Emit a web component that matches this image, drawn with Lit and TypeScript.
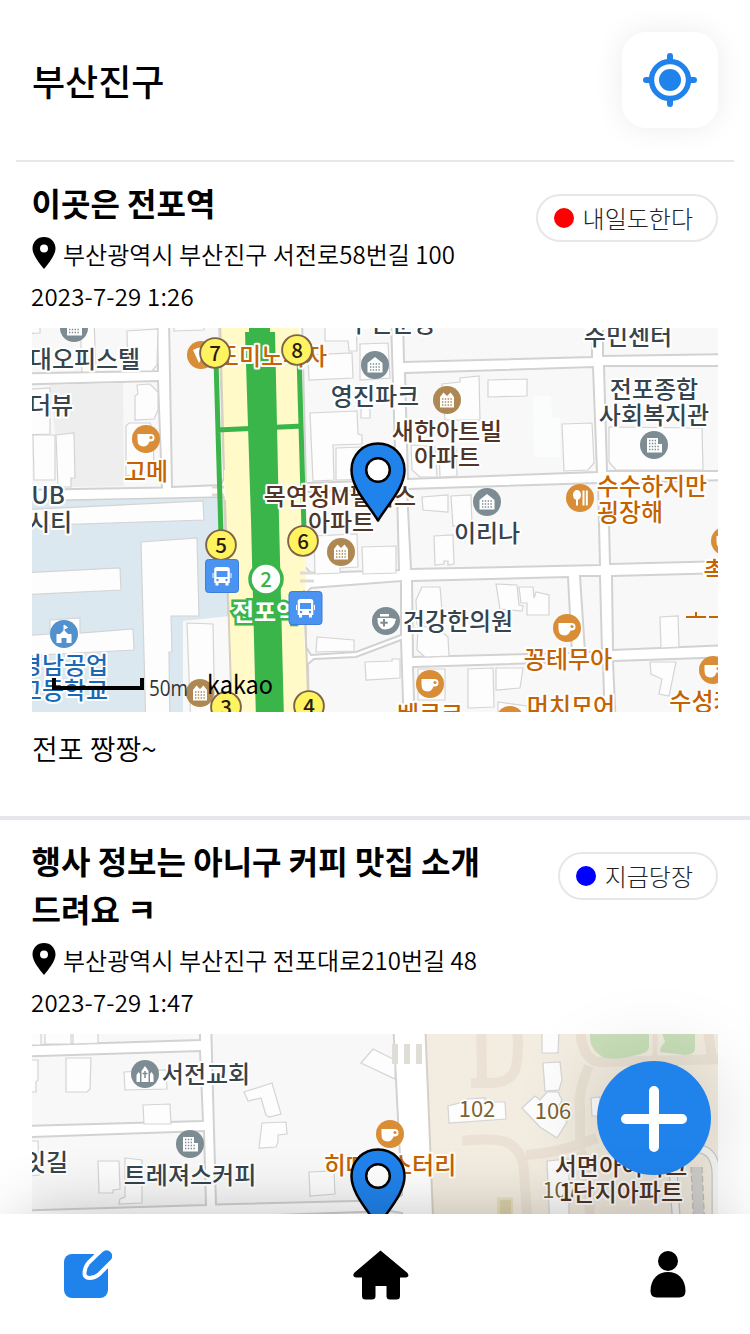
import { LitElement, html, svg, css } from "lit";
import { customElement, property } from "lit/decorators.js";

type Poi = [number, number, string, string];
type Label = [number, number, string, string];

const SLATE = "#7d8c93";
const ORANGE = "#d98d37";
const BROWN = "#ae8753";
const INK = "#36444d";
const RUST = "#c46300";
const COCOA = "#513526";

const glyphs: Record<string, unknown> = {
  cup: svg`<path d="M-8.500-5H4.500q4 0 4 4t-5 3.500q-1.800 5-6 5q-6 0-6-7z"/><circle cx="5" cy="-1.500" r="1.600" fill="#d98d37"/>`,
  home: svg`<path d="M-7.500-2 0-8 7.500-2V7.500H-7.500z"/><path d="M-5-1H5M-5 2H5M-5 5H5" stroke="#7d8c93" stroke-width="1.400" stroke-dasharray="1.400 1.400"/>`,
  office: svg`<path d="M-7-7H4V-1H8V7.500H-7z"/><path d="M-5-4.500H3M-5-1.500H3M-5 1.500H6M-5 4.500H6" stroke="#7d8c93" stroke-width="1.400" stroke-dasharray="1.400 1.400"/>`,
  apt: svg`<path d="M-7-3-3.500-7.500 0-4 3.500-7.500 7-3V7.500H-7z"/><path d="M-5-1H5M-5 2H5M-5 5H5" stroke="#ae8753" stroke-width="1.400" stroke-dasharray="1.400 1.400"/>`,
  fork: svg`<ellipse cx="-3" cy="-3" rx="4" ry="5"/><path d="M-3 0V7.500M3.500-7.500V7.500M6.800-7.500V7.500" stroke="#fff" stroke-width="2"/>`,
  pizza: svg`<path d="M-8-5Q-2-9 6-7L-2 8z"/>`,
  school: svg`<path d="M-7.500 0H-4L0-4 4 0H7.500V9H2.500V4H-2.500V9H-7.500z"/><path d="M0-3V-9L3.500-6.500 0-5" stroke="#fff" stroke-width="1"/>`,
  church: svg`<path d="M-3.500 8V-3L0-8 3.500-3V8zM-8.500 8V1l2-3 1.500 2V8zM8.500 8V1L6.500-2 5 0V8z"/><path d="M0-3V4M-2.500-.5H2.500" stroke="#7d8c93" stroke-width="1.500"/>`,
  clinic: svg`<path d="M-8.500-3H5L10-2Q8 8.500-1 8.500Q-9 8-8.500-3zM-6-7H3V-4.500H-6z"/><path d="M-2-2V5.500M-5.700 1.800H1.700" stroke="#7d8c93" stroke-width="2"/>`,
};

const poi = ([x, y, color, kind]: Poi) => svg`<g transform="translate(${x} ${y})" fill="#fff">
  <circle r="14" fill=${color}></circle>${glyphs[kind]}</g>`;

const label = ([x, y, color, text]: Label) =>
  svg`<text class="label" x=${x} y=${y + 0.6} fill=${color}>${text}</text>`;

const poly = (cls: string, list: string[]) =>
  list.map((p) => svg`<polygon class=${cls} points=${p}></polygon>`);

const pin = (x: number, y: number) => svg`<g transform="translate(${x} ${y})">
  <path d="M0-26.500C15-26.500 26.500-15 26.500 0C26.500 18 10 34 0 50.500C-10 34-26.500 18-26.500 0C-26.500-15-15-26.500 0-26.500z"
    fill="#2083ec" stroke="#000" stroke-width="2.500" stroke-linejoin="round"/>
  <circle cy="0" r="11.800" fill="#fff" stroke="#000" stroke-width="2.500"/></g>`;

const exit = (x: number, y: number, n: string) => svg`
  <circle cx=${x} cy=${y} r="14.900" fill="#fff460" stroke="#7c6446" stroke-width="1.900"></circle>
  <text class="exit" x=${x} y=${y + 7.5} fill="#2c1b12">${n}</text>`;

const bus = (x: number, y: number) => svg`<g transform="translate(${x} ${y})">
  <rect x="-16.500" y="-16.500" width="33" height="33" rx="3" fill="#4a93f0" stroke="#3c7fd6" stroke-width="1"/>
  <path fill="#fff" d="M-5-9H5q2.800 0 2.800 2.500V7H6.500v2.500H3.500V7h-7v2.500H-6.500V7H-7.800V-6.500Q-7.800-9-5-9z"/>
  <path d="M-5.500-5H5.500V1H-5.500z" fill="#4a93f0"/><circle cx="-4.500" cy="4" r="1.200" fill="#4a93f0"/><circle cx="4.500" cy="4" r="1.200" fill="#4a93f0"/>
  <path d="M-9-3V2M9-3V2" stroke="#fff" stroke-width="1"/></g>`;

const stationMap = () => svg`
  ${poly("block", [
    "20,320 157,320 158,371 20,373.500",
    "20,384.500 158,381 162,487.500 20,490",
    "169,320 219,320 224,478 221,485 172,487",
    "302,320 391,320 396,480 306,483",
    "403,320 404,362 592,357 592,320",
    "603,320 603,356 730,354 730,320",
    "405,373 593,367 597,472 408,479",
    "604,366 730,366 730,471 607,471",
    "305,492 397,489 399,570 311,573 304,566",
    "407,489 598,483 600,565 411,569",
    "608,483 730,480 730,561 610,564",
    "305,594 311,588 401,581 401,635 356,652 311,655 306,647",
    "308,664 314,659 356,657 401,640 404,730 309,730",
    "412,581 568,577 572,653 413,657",
    "580,576 600,576 602,652 585,652",
    "612,576 730,573 730,645 613,650",
    "413,667 603,661 605,730 415,730",
    "613,661 730,657 730,730 616,730",
  ])}
  <path d="M50 385 123 383 124 486 71 487 71 435 55 434z" fill="#eee"/>
  <path d="M20 501 224 497 232 730 20 730z" fill="#dce8ef" stroke="#d0d0cf" stroke-width="1.500"/>
  <path d="M183 621 230 616 234 730H183z" fill="#f9f9f9"/>
  ${poly("house", [
    "20,320 40,320 40,333 20,334",
    "94,320 96,372 82,372 80,320",
    "127,331 158,329 157,365 152,371 128,371",
    "137,385 150,384 158,392 158,410 154,419 135,420 135,396 138,394",
    "126,426 129,423 150,423 153,430 154,470 126,476",
    "33,435 55,435 55,480 34,480", "56,435 74,433 75,478 71,478 71,487 58,487",
    "20,390 50,388 50,434 20,435",
    "20,510 203,501 204,520 20,526",
    "20,573 120,568 121,590 20,595",
    "141,542 197,538 199,616 171,616 172,652 169,652 170,730 146,730",
    "20,636 50,634 50,620 80,618 80,633 133,629 134,650 20,656",
    "187,623 213,624 215,730 191,730",
    "174,320 204,320 204,330 174,331",
    "325,320 325,341 348,341 349,351 357,351 356,320",
    "308,355 352,353 353,378 309,380",
    "360,344 388,343 390,378 360,380",
    "310,413 357,411 358,434 362,435 362,444 333,445 334,480 313,481",
    "336,448 388,446 389,479 336,480",
    "361,408 361,418 370,418 370,406",
    "442,384 460,382 460,378 479,376 480,420 445,420",
    "488,380 527,379 527,396 488,397",
    "562,424 592,423 594,463 588,470 564,471",
    "609,427 702,428 703,470 616,470 609,462",
    "411,445 435,447 437,477 420,477 412,470", "439,450 456,449 457,476 440,477",
    "314,536 357,534 358,567 340,568 340,573 315,574",
    "362,547 396,546 396,573 363,574",
    "422,497 448,495 448,512 423,510", "451,496 471,495 472,525 453,526",
    "434,536 453,535 454,564 448,565 448,561 444,561 444,564 435,565",
    "317,637 354,640 354,651 316,652",
    "365,662 392,661 392,659 400,659 400,678 366,680",
    "416,600 422,587 440,587 443,622 417,624",
    "418,625 440,630 448,637 449,656 425,657 417,650",
    "496,584 517,585 519,605 523,606 522,611 500,609",
    "519,587 533,587 534,598 536,592 549,595 549,615 527,615 527,603 521,603",
    "660,617 678,616 679,647 661,648",
    "650,662 676,662 669,696 659,694 662,679 651,674",
    "468,669 493,668 494,707 468,708", "496,668 523,668 520,688 496,690",
    "498,702 527,706 527,730 498,730", "418,669 445,669 445,700 418,700",
  ])}
  <path d="M533 396 551 396 552 417 560 418V457H534z" fill="#fbfdfc"/>
  <path d="M219 320H299L302 480 306 560 302 720H232z" fill="#fffac8"/>
  <path d="M300 560 304 640 309 720H290V560z" fill="#fffac8"/>
  <path d="M220 320 224 470M225 500 232 720M301 370 303 480M304 590 309 720" stroke="#d6d0bd" stroke-width="2" fill="none"/>
  <path d="M212 487h12M212 495h12M300 573h14M300 581h14" stroke="#dedbd6" stroke-width="3"/>
  <path d="M249 320H270V332H275L279 520 284 720H256L251 520 245 332H249z" fill="#39b54a"/>
  <path d="M216 360 221 536M299 356 304 530M217 430 303 426" stroke="#39b54a" stroke-width="5" fill="none"/>
  ${([[74, 328, SLATE, "office"], [146, 439, ORANGE, "cup"], [201, 355, ORANGE, "pizza"],
    [375, 365, SLATE, "home"], [447, 400, BROWN, "apt"], [654, 445, SLATE, "office"],
    [580, 498, ORANGE, "fork"], [487, 502, SLATE, "home"], [341, 552, BROWN, "apt"],
    [386, 621, SLATE, "clinic"], [567, 628, ORANGE, "cup"], [430, 684, ORANGE, "cup"],
    [713, 670, ORANGE, "cup"], [725, 541, ORANGE, "cup"], [510, 720, ORANGE, "cup"],
    [64, 634, "#5091ce", "school"], [200, 693, BROWN, "apt"]] as Poi[]).map(poi)}
  ${([[85, 367, INK, "대오피스텔"], [51, 413, INK, "더뷰"], [48, 503, INK, "UB"], [50, 530, INK, "시티"],
    [146, 479, RUST, "고메"], [272, 364, RUST, "도미노피자"], [375, 404, INK, "영진파크"],
    [392, 331, INK, "주민운동"], [628, 344, INK, "주민센터"], [447, 439, COCOA, "새한아트빌"],
    [447, 465, COCOA, "아파트"], [340, 504, COCOA, "목연정M펠리스"], [341, 530, COCOA, "아파트"],
    [654, 397, INK, "전포종합"], [654, 423, INK, "사회복지관"], [652, 494, RUST, "수수하지만"],
    [630, 520, RUST, "굉장해"], [487, 541, INK, "이리나"], [458, 629, INK, "건강한의원"],
    [568, 667, RUST, "꽁테무아"], [571, 714, RUST, "머치모어"], [430, 722, RUST, "베르크"],
    [713.5, 709, RUST, "수성커피"], [714.5, 578, RUST, "촉"],
    [64, 673, "#1b69b6", "경남공업"], [64, 698, "#1b69b6", "고등학교"]] as Label[]).map(label)}
  <path d="M686 617H706M696 612V617M709 617H722" stroke=${RUST} stroke-width="2"></path>
  ${exit(215, 353, "7")}${exit(297, 350, "8")}${exit(221, 545, "5")}${exit(303, 541, "6")}
  ${exit(226, 707, "3")}${exit(309, 706, "4")}
  <circle cx="266" cy="579" r="16" fill="#fff" stroke="#39b54a" stroke-width="3.500"/>
  <text class="exit" x="266" y="586.500" fill="#39b54a">2</text>
  <text class="station" x="265" y="620.500">전포역</text>
  ${bus(222, 576)}${bus(305.5, 608)}
  <path d="M54 678V688H142V678" fill="none" stroke="#000" stroke-width="4"/>
  <text class="scale" x="149" y="696" textLength="39" lengthAdjust="spacingAndGlyphs">50m</text>
  <text class="kakao" x="207" y="694" textLength="66" lengthAdjust="spacingAndGlyphs">kakao</text>
  ${pin(378, 470)}`;

const cafeMap = () => svg`
  ${poly("block", [
    "20,1020 200,1020 200,1040 20,1045.500",
    "20,1056.500 200,1051 203,1121 20,1126",
    "20,1137.500 204,1131 206,1205 20,1210.500",
    "211,1020 393,1020 396,1080 402,1195 394,1200 216,1204.500",
    "215,1217 390,1211 402,1213 402,1240 215,1240",
  ])}
  ${poly("house", [
    "30,1020 41,1020 41,1045 30,1045", "45,1020 71,1020 71,1044 45,1044", "73,1020 98,1020 98,1043 73,1044",
    "20,1060 38,1060 38,1080 36,1082 36,1092 20,1092",
    "66,1058 91,1058 90,1089 87,1092 66,1092",
    "124,1072 166,1070 167,1089 125,1090", "143,1105 170,1104 171,1124 144,1124",
    "20,1141 38,1141 39,1175 20,1177",
    "98,1161 119,1161 120,1189 113,1190 113,1193 99,1193",
    "125,1158 142,1160 142,1203 119,1204 120,1199 125,1197",
    "244,1092 272,1083 281,1114 269,1117 266,1115 261,1098 248,1101",
    "262,1123 286,1122 287,1134 278,1135 278,1142 276,1147 259,1148",
    "309,1172 334,1171 335,1194 310,1196",
    "361,1063 373,1049 395,1060 395,1079",
  ])}
  <path d="M425 1020H730V1240H434z" fill="#f3ece0" stroke="#d5d1ca" stroke-width="2"/>
  <path d="M392 1044h6v20h-6zM404 1044h6v20h-6zM416 1044h6v20h-6z" fill="#e0dcd6"/>
  <g fill="none" stroke="#ebe2d5" stroke-width="10">
    <path d="M481 1020 482 1083M471 1083H490Q513 1083 516 1066Q520 1050 516 1020"/>
    <path d="M462 1141Q500 1137 510 1144Q523 1152 524 1172L528 1230M526 1155Q560 1153 597 1138"/>
    <path d="M580 1020Q580 1061 600 1062L730 1059M589 1066Q578 1090 580 1107V1142M708 1030 712 1060M580 1150Q590 1165 590 1230"/>
    <path d="M655 1020V1060" stroke-width="5"/>
  </g>
  <path d="M590 1030H649V1046Q649 1052 641 1054Q608 1063 600 1055Q592 1050 590 1040zM661 1030H695V1048Q695 1055 685 1055L660 1052Q660 1047 665 1042z" fill="#c9dfb9"/>
  ${poly("house", [
    "542,1030 559,1030 558,1053 542,1053",
    "543,1063 560,1062 562,1080 559,1090 545,1091",
    "522,1108 535,1096 540,1100 547,1092 558,1092 562,1100 558,1108 567,1122 557,1138 540,1127",
    "448,1106 467,1101 467,1099 485,1098 485,1102 505,1102 506,1119 449,1123",
    "591,1098 600,1097 600,1116 592,1116", "547,1161 569,1159 569,1230 550,1230",
  ])}
  <path d="M497 1197.500H513V1230H497z" fill="#eadfc0"/>
  <path d="M500 1200H511V1230H500z" fill="#dcd3aa"/>
  <path d="M673 1170 677 1230M700 1149Q716 1152 716 1175V1230" fill="none" stroke="#c9c9c6" stroke-width="9"/>
  <path d="M673 1170 677 1230M700 1149Q716 1152 716 1175V1230" fill="none" stroke="#f7f7f5" stroke-width="6.500"/>
  <path d="M691 1167H702L705 1230H694z" fill="#d4d3cf"/>
  <path d="M691 1167 694 1230M702 1167 705 1230" stroke="#bbb" stroke-width="1.200" stroke-dasharray="6 3"/>
  ${([[145, 1074, SLATE, "church"], [190, 1144, SLATE, "office"], [390, 1134, ORANGE, "cup"]] as Poi[]).map(poi)}
  ${([[206, 1082, INK, "서전교회"], [190, 1183, INK, "트레져스커피"], [46, 1170, INK, "잇길"],
    [390, 1173, RUST, "히떼로스터리"], [621, 1174, COCOA, "서면아이파크"]] as Label[]).map(label)}
  <text class="unit" x="477" y="1117">102</text>
  <text class="unit" x="553" y="1119">106</text>
  <text class="unit" x="560.500" y="1197.500">107</text>
  ${label([621, 1200, COCOA, "1단지아파트"])}
  ${pin(378, 1176)}`;

@customElement("street-map")
class StreetMap extends LitElement {
  @property() area = "station";
  static styles = css`
    :host { display: block; height: 384px; }
    svg { display: block; width: 100%; height: 100%; background: #fff; }
    .block { fill: #f8f8f8; stroke: #d2d2d2; stroke-width: 2; }
    .house { fill: #fdfdfe; stroke: #d4d4d4; stroke-width: 1.2; }
    text { font-family: "Noto Sans CJK KR", sans-serif; }
    .label { font-size: 24px; font-weight: 500; text-anchor: middle; paint-order: stroke; stroke: #fff; stroke-width: 4px; stroke-linejoin: round; }
    .exit { font-size: 20.5px; font-weight: 500; text-anchor: middle; }
    .station { font-size: 24px; font-weight: 700; text-anchor: middle; fill: #fff; paint-order: stroke; stroke: #39b54a; stroke-width: 5px; }
    .unit { font-size: 22px; text-anchor: middle; fill: #7d6233; paint-order: stroke; stroke: #fff; stroke-width: 3px; }
    .scale { font-size: 21px; font-weight: 400; fill: #333; font-family: "Open Sans", sans-serif; }
    .kakao { font-size: 25px; font-weight: 400; fill: #000; }
  `;
  render() {
    const station = this.area === "station";
    return html`<svg viewBox=${station ? "32 328 686 384" : "32 1034 686 384"}>
      ${station ? stationMap() : cafeMap()}
    </svg>`;
  }
}

@customElement("post-item")
class PostItem extends LitElement {
  @property() heading = "";
  @property() address = "";
  @property() time = "";
  @property() tag = "";
  @property() tone = "red";
  @property() area = "";
  @property() body = "";
  static styles = css`
    :host { display: block; padding: 16px 32px 0; border-bottom: 4px solid #e5e7eb; }
    .top { display: flex; justify-content: space-between; align-items: flex-start; }
    .left { display: flex; flex-direction: column; }
    h2 { margin: 0 0 0 -0.5px; width: 465px; font-size: 32px; line-height: 48px; font-weight: 700; word-break: normal; }
    .tag { display: flex; align-items: center; box-sizing: border-box; height: 48px; margin-top: 16px; padding: 0 23px 0 16px; border: 2px solid #e5e7eb; border-radius: 24px; font-size: 24px; line-height: 44px; font-weight: 300; color: #222; white-space: nowrap; }
    .tag span:last-child { height: 44px; }
    .dot { width: 20px; height: 20px; margin-right: 9px; border-radius: 50%; }
    .red { background: #f00; }
    .blue { background: #00f; }
    .info { display: flex; align-items: center; height: 54px; gap: 7px; font-size: 24px; font-weight: 350; letter-spacing: 0.04px; white-space: nowrap; }
    .info svg { width: 24px; height: 32px; }
    .time { height: 48px; margin-left: -1px; line-height: 32px; font-size: 24px; font-weight: 350; letter-spacing: 0.2px; }
    p { margin: 0; height: 104px; line-height: 72px; font-size: 28px; font-weight: 350; }
  `;
  render() {
    return html`
      <div class="top">
        <div class="left">
          <h2>${this.heading}</h2>
          <div class="info">
            <svg viewBox="0 0 24 32"><path fill-rule="evenodd" d="M12 0C18.500 0 23.500 4.800 23.500 11.500C23.500 18 16.500 26.500 12 32C7.500 26.500.5 18 .5 11.500C.5 4.800 5.500 0 12 0zM12 7.500a4 4 0 1 0 0 8a4 4 0 0 0 0-8z"/></svg>
            <span>${this.address}</span>
          </div>
          <div class="time">${this.time}</div>
        </div>
        <div class="tag"><span class="dot ${this.tone}"></span><span>${this.tag}</span></div>
      </div>
      <street-map area=${this.area}></street-map>
      <p>${this.body}</p>
    `;
  }
}

@customElement("app-root")
class AppRoot extends LitElement {
  static styles = css`
    :host { display: block; position: relative; height: 1334px; overflow: hidden; background: #fff; color: #000; font-family: "Noto Sans CJK KR", sans-serif; }
    header { display: flex; align-items: center; justify-content: space-between; box-sizing: border-box; height: 162px; margin: 0 16px; padding: 0 16px; border-bottom: 2px solid #e5e7eb; }
    h1 { margin: 0; font-size: 36px; font-weight: 500; }
    .locate { display: flex; align-items: center; justify-content: center; width: 96px; height: 96px; border-radius: 24px; background: #fff; box-shadow: 0 0 30px rgba(0, 0, 0, 0.08); }
    .fab { position: absolute; left: 597px; top: 1061px; display: flex; align-items: center; justify-content: center; width: 114px; height: 114px; border-radius: 50%; background: #2083ec; box-shadow: 0 4px 90px -4px rgba(0, 0, 0, 0.22); }
    nav { position: absolute; left: 0; right: 0; bottom: 0; display: flex; align-items: center; justify-content: space-between; box-sizing: border-box; height: 120px; padding: 0 64px; background: #fff; box-shadow: 0 -16px 70px -24px rgba(0, 0, 0, 0.3); }
    svg { display: block; }
  `;
  render() {
    return html`
      <header>
        <h1>부산진구</h1>
        <div class="locate">
          <svg width="54" height="54" viewBox="-27 -27 54 54">
            <circle r="18.500" fill="none" stroke="#2083ec" stroke-width="5.400"/><circle r="11" fill="#2083ec"/>
            <path d="M0-24V-20M0 20V24M-24 0H-20M20 0H24" stroke="#2083ec" stroke-width="6" stroke-linecap="round"/>
          </svg>
        </div>
      </header>
      <post-item heading="이곳은 전포역" address="부산광역시 부산진구 서전로58번길 100" time="2023-7-29 1:26" tag="내일도한다" tone="red" area="station" body="전포 짱짱~"></post-item>
      <post-item heading="행사 정보는 아니구 커피 맛집 소개드려요 ㅋ" address="부산광역시 부산진구 전포대로210번길 48" time="2023-7-29 1:47" tag="지금당장" tone="blue" area="cafe"></post-item>
      <div class="fab">
        <svg width="68" height="68" viewBox="0 0 68 68"><path d="M34 6V62M6 34H62" transform="translate(0 1)" stroke="#fff" stroke-width="10" stroke-linecap="round"/></svg>
      </div>
      <nav>
        <svg width="48" height="48" viewBox="0 0 48 48">
          <path d="M8 4H36L44 10V40a8 8 0 0 1-8 8H8a8 8 0 0 1-8-8V12a8 8 0 0 1 8-8z" fill="#2083ec"/>
          <path d="M30 4H48V16H40z" fill="#fff"/>
          <path d="M38.500 2a5.600 5.600 0 0 1 8 8L33.500 23Q30 26 25.500 26Q22 26 22.500 22.500Q23 17.500 26 14z" fill="#2083ec" stroke="#fff" stroke-width="8" paint-order="stroke"/>
        </svg>
        <svg width="56" height="52" viewBox="0 -2 56 52">
          <path d="M27.500.5 54.500 23Q57 27 53 27.500H47V46q0 3.500-3.500 3.500H37q-3.500 0-3.500-3.500V36H22.500V46q0 3.500-3.500 3.500H12.500Q9 49.500 9 46V27.500H3Q-1 27 1 23z"/>
        </svg>
        <svg width="36" height="48" viewBox="0 0 36 48">
          <circle cx="18" cy="11" r="10"/>
          <path d="M18 22C28 22 35.500 29 35.500 41Q35.500 47.500 29 47.500H7Q.5 47.500.5 41C.5 29 8 22 18 22z"/>
        </svg>
      </nav>
    `;
  }
}
